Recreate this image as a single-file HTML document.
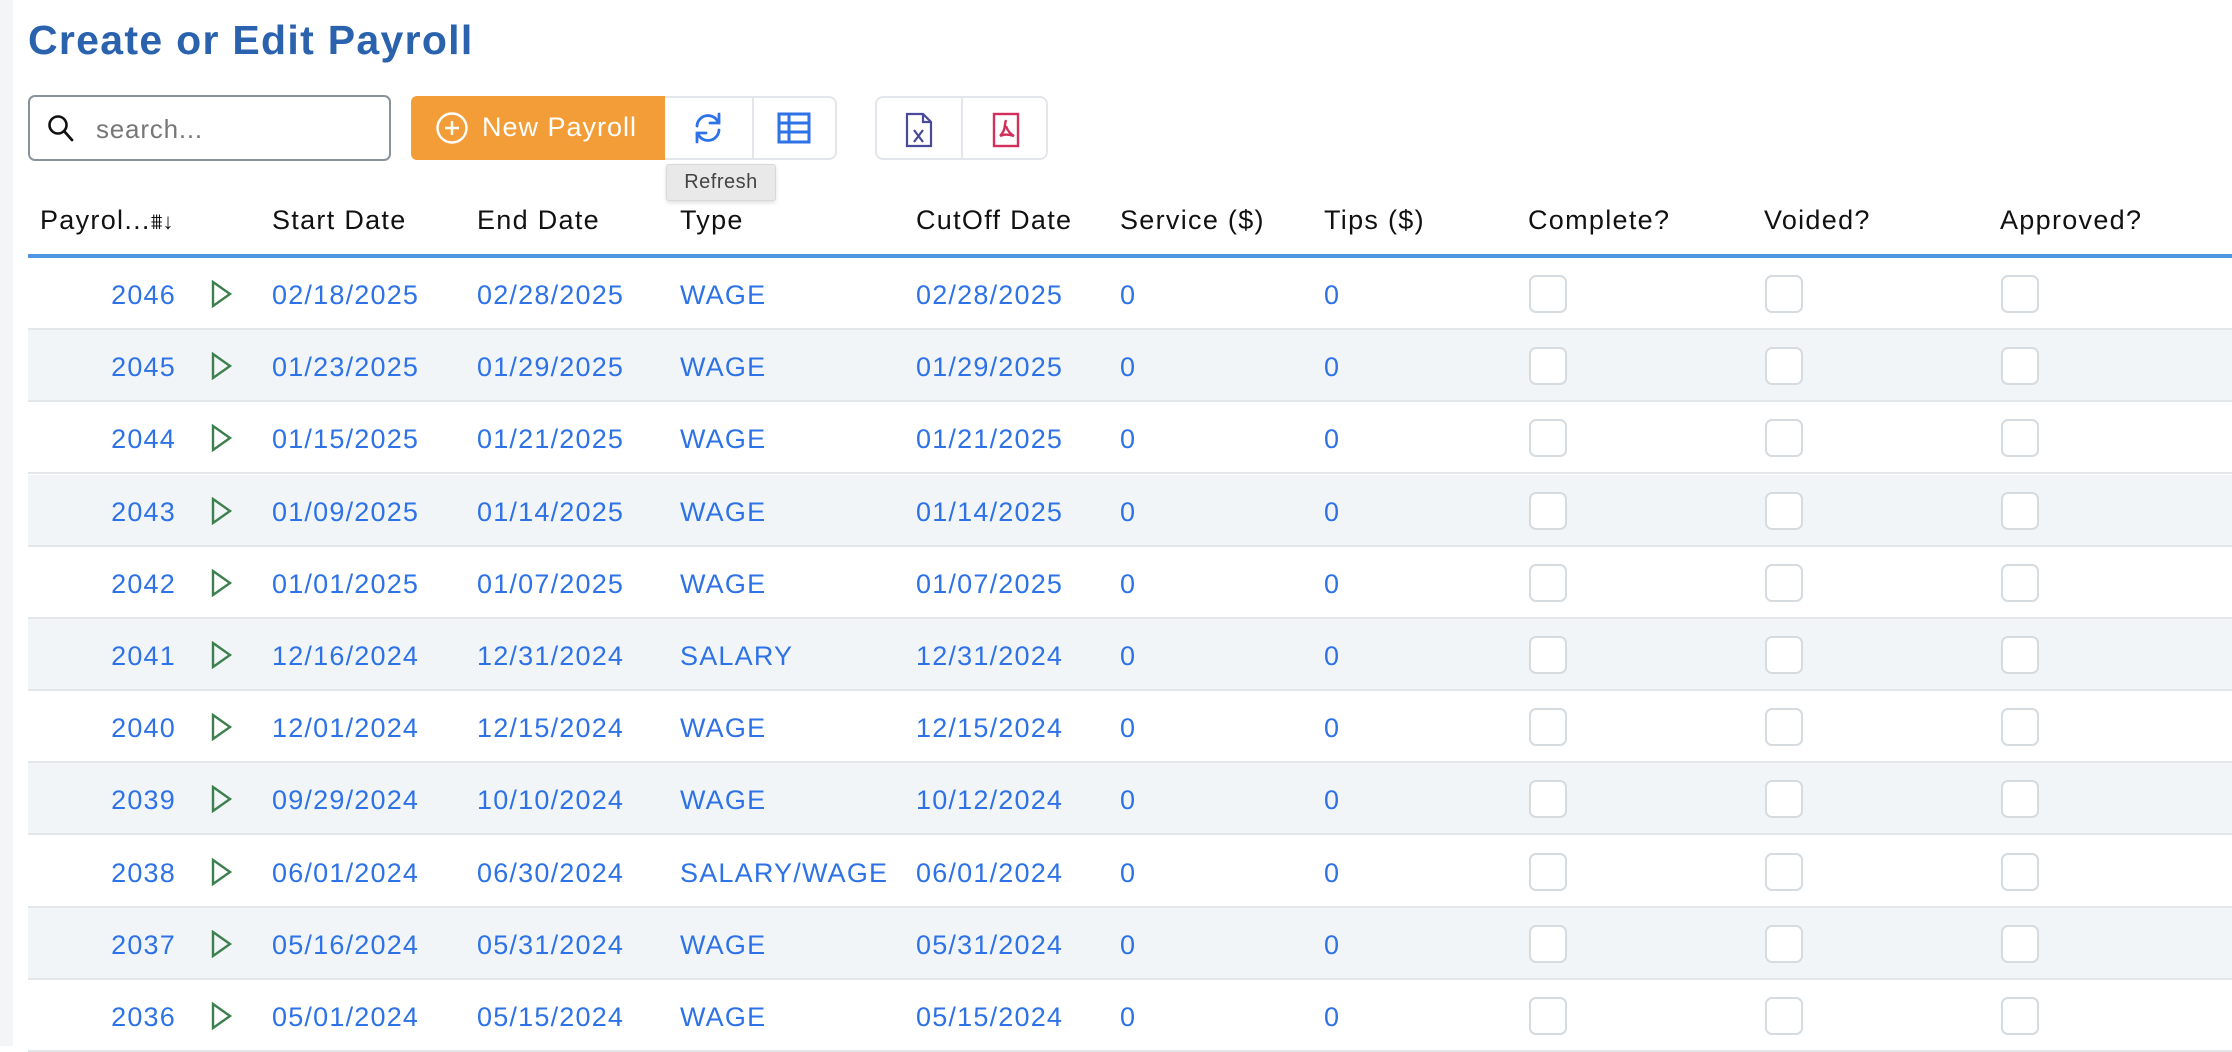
<!DOCTYPE html>
<html><head><meta charset="utf-8"><style>
*{box-sizing:border-box;margin:0;padding:0}
body{width:2232px;height:1046px;overflow:hidden;background:#fff;font-family:"Liberation Sans",sans-serif;position:relative}
.strip{position:absolute;left:0;top:0;width:13px;height:1046px;background:#f4f5f7}
.title{position:absolute;left:28px;top:17px;font-size:41px;color:#2a62ad;font-weight:bold;letter-spacing:1.3px}
.search{position:absolute;left:28px;top:95px;width:363px;height:66px;border:2px solid #8a939c;border-radius:7px}
.search span{position:absolute;left:66px;top:17px;font-size:26px;color:#777;letter-spacing:0.8px}
.btn-new{position:absolute;left:411px;top:96px;width:254px;height:64px;background:#f29d38;border-radius:6px 0 0 6px;color:#fff;font-size:27px;letter-spacing:1px}
.btn-new span{position:absolute;left:71px;top:16px}
.grp{position:absolute;top:96px;height:64px;border:2px solid #e3e6ea;border-radius:0 8px 8px 0}
.grp2{border-radius:8px}
.tip{position:absolute;left:666px;top:164px;width:110px;height:37px;background:#e9e9e9;border:1px solid #d8d8d8;border-radius:3px;font-size:20px;color:#444;text-align:center;line-height:35px;box-shadow:0 2px 4px rgba(0,0,0,.12);letter-spacing:0.5px}
.hdr{position:absolute;top:205px;font-size:27px;color:#111;letter-spacing:1.3px}
.line{position:absolute;left:28px;top:254px;width:2204px;height:4px;background:#4f97e3}
.row{position:absolute;left:28px;width:2204px;height:72px;border-bottom:2px solid #e4e7ea}
.row.alt{background:#f2f5f8}
.c{position:absolute;top:22px;font-size:27px;color:#2d72e6;letter-spacing:1.2px}
.id{left:0;width:148px;text-align:right}
.play{position:absolute;left:183px;top:22px}
.cb{position:absolute;top:17px;width:38px;height:38px;border:2px solid #d6dbe0;border-radius:7px;background:#fff}
</style></head><body>
<div class="strip"></div>
<div class="title">Create or Edit Payroll</div>
<div class="search">
<svg style="position:absolute;left:16px;top:16px" width="30" height="30" viewBox="0 0 30 30"><circle cx="12" cy="12" r="8.5" fill="none" stroke="#111" stroke-width="2.6"/><line x1="18" y1="18" x2="26" y2="27" stroke="#111" stroke-width="2.8" stroke-linecap="round"/></svg>
<span>search...</span></div>
<div class="btn-new">
<svg style="position:absolute;left:24px;top:15px" width="34" height="34" viewBox="0 0 34 34"><circle cx="17" cy="17" r="14.5" fill="none" stroke="#fff" stroke-width="2.4"/><path d="M17 10v14M10 17h14" stroke="#fff" stroke-width="2.4"/></svg>
<span>New Payroll</span></div>
<div class="grp" style="left:665px;width:172px;border-left:none"></div>
<div style="position:absolute;left:752px;top:96px;width:2px;height:64px;background:#e3e6ea"></div>
<svg style="position:absolute;left:690px;top:110px" width="36" height="36" viewBox="0 0 36 36" fill="none" stroke="#2d72e6" stroke-width="2.8" stroke-linecap="round"><path d="M7 16A11 11 0 0 1 28 12"/><path d="M29 4v9h-9"/><path d="M29 20A11 11 0 0 1 8 24"/><path d="M7 32v-9h9"/></svg>
<svg style="position:absolute;left:777px;top:112px" width="34" height="32" viewBox="0 0 34 32" fill="none" stroke="#2d72e6" stroke-width="3"><rect x="2" y="2" width="30" height="28"/><path d="M2 11h30M2 20h30M12 2v28"/></svg>
<div class="grp grp2" style="left:875px;width:173px"></div>
<div style="position:absolute;left:961px;top:96px;width:2px;height:64px;background:#e3e6ea"></div>
<svg style="position:absolute;left:905px;top:112px" width="28" height="36" viewBox="0 0 28 36" fill="none" stroke="#4a4a9a" stroke-width="2.2"><path d="M2 2h16l8 8v24H2z"/><path d="M18 2v8h8"/><path d="M9 18l9 12M18 18l-9 12"/></svg>
<svg style="position:absolute;left:992px;top:112px" width="28" height="36" viewBox="0 0 28 36" fill="none" stroke="#d2305a" stroke-width="2.4"><rect x="2" y="2" width="24" height="32"/><path d="M14 8c-2 6 0 10-6 16M14 14c2 6 5 8 8 10M8 24c4-2 8-2 14 0"/></svg>
<div class="tip">Refresh</div>

<div class="hdr" style="left:40px">Payrol...<span style="font-size:22px;letter-spacing:0">⩩↓</span></div>
<div class="hdr" style="left:272px">Start Date</div>
<div class="hdr" style="left:477px">End Date</div>
<div class="hdr" style="left:680px">Type</div>
<div class="hdr" style="left:916px">CutOff Date</div>
<div class="hdr" style="left:1120px">Service ($)</div>
<div class="hdr" style="left:1324px">Tips ($)</div>
<div class="hdr" style="left:1528px">Complete?</div>
<div class="hdr" style="left:1764px">Voided?</div>
<div class="hdr" style="left:2000px">Approved?</div>
<div class="line"></div>

<div id="rows"></div>
<script>
var d=[["2046","02/18/2025","02/28/2025","WAGE","02/28/2025"],["2045","01/23/2025","01/29/2025","WAGE","01/29/2025"],["2044","01/15/2025","01/21/2025","WAGE","01/21/2025"],["2043","01/09/2025","01/14/2025","WAGE","01/14/2025"],["2042","01/01/2025","01/07/2025","WAGE","01/07/2025"],["2041","12/16/2024","12/31/2024","SALARY","12/31/2024"],["2040","12/01/2024","12/15/2024","WAGE","12/15/2024"],["2039","09/29/2024","10/10/2024","WAGE","10/12/2024"],["2038","06/01/2024","06/30/2024","SALARY/WAGE","06/01/2024"],["2037","05/16/2024","05/31/2024","WAGE","05/31/2024"],["2036","05/01/2024","05/15/2024","WAGE","05/15/2024"]];
var h="";
d.forEach(function(r,i){
h+='<div class="row'+(i%2?' alt':'')+'" style="top:'+(258+i*72.2)+'px">'+
'<div class="c id">'+r[0]+'</div>'+
'<svg class="play" width="22" height="28" viewBox="0 0 22 28"><path d="M2 2L19 14L2 26Z" fill="none" stroke="#3d8050" stroke-width="2.4" stroke-linejoin="miter"/></svg>'+
'<div class="c" style="left:244px">'+r[1]+'</div>'+
'<div class="c" style="left:449px">'+r[2]+'</div>'+
'<div class="c" style="left:652px">'+r[3]+'</div>'+
'<div class="c" style="left:888px">'+r[4]+'</div>'+
'<div class="c" style="left:1092px">0</div>'+
'<div class="c" style="left:1296px">0</div>'+
'<div class="cb" style="left:1501px"></div><div class="cb" style="left:1737px"></div><div class="cb" style="left:1973px"></div></div>';
});
document.getElementById("rows").innerHTML=h;
</script>
</body></html>
